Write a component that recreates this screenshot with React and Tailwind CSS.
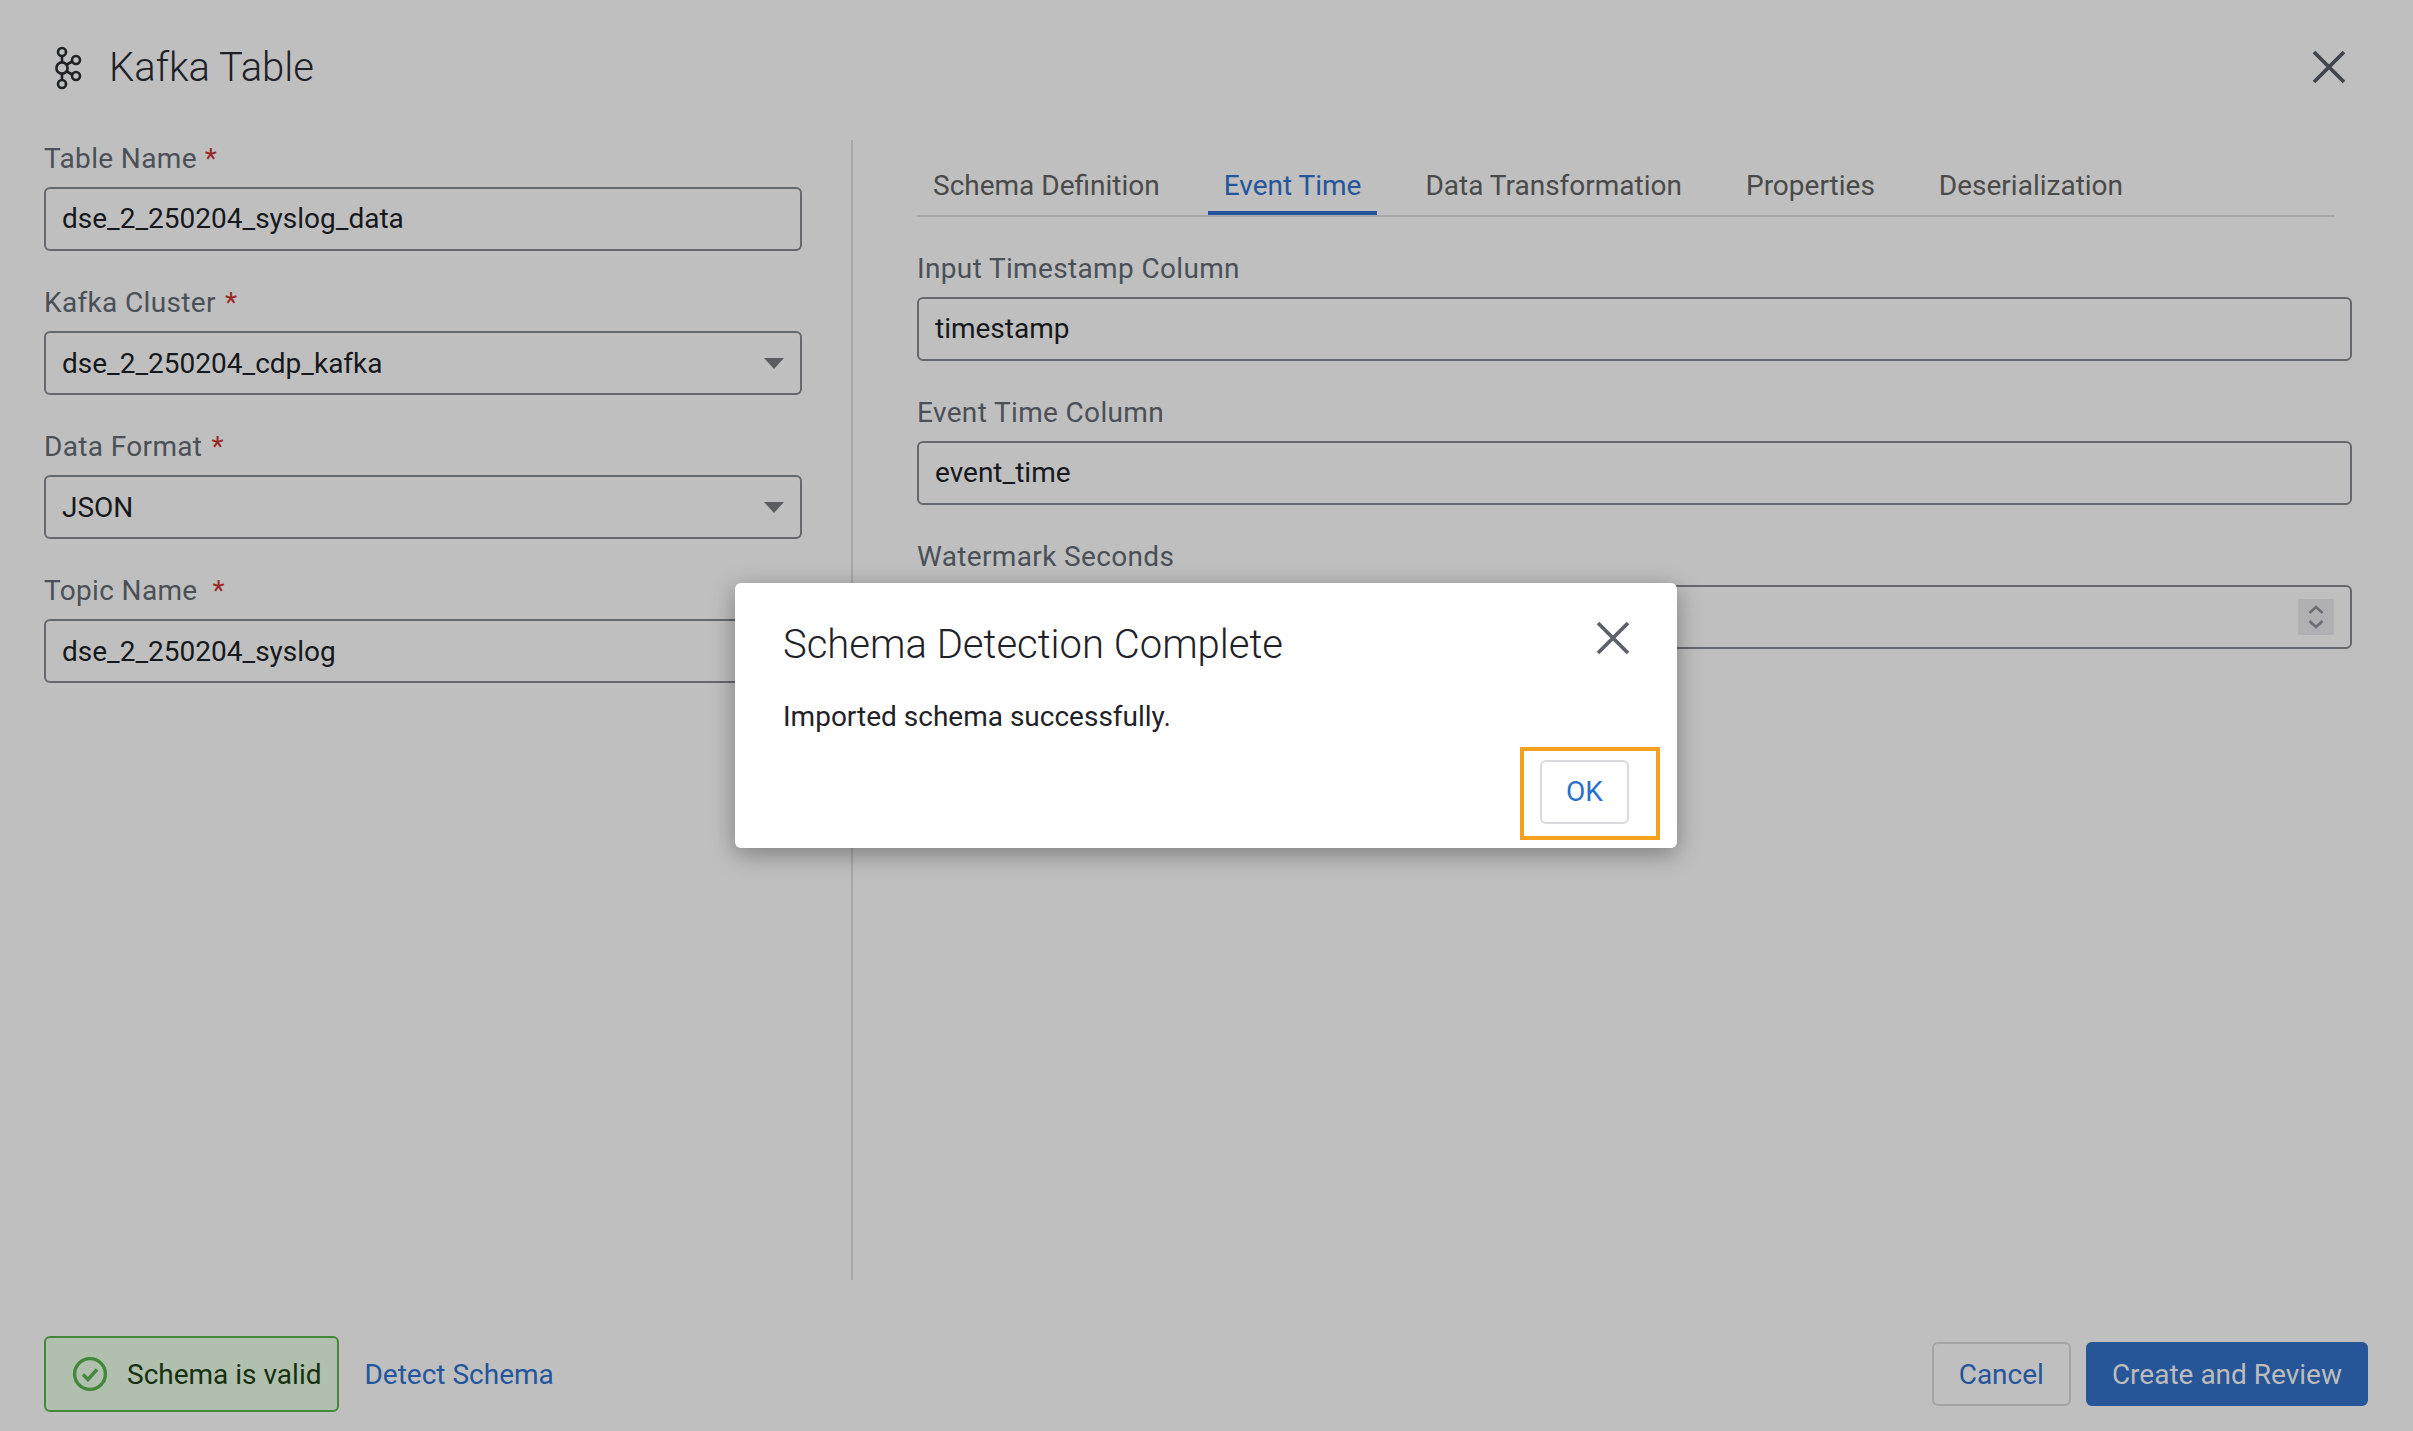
import React from "react";

const font = "font-['Roboto',sans-serif]";

const KafkaIcon = () => (
  <svg width="30" height="44" viewBox="0 0 30 44" fill="none" stroke="#1e2126" strokeWidth="2.6">
    <line x1="9" y1="10" x2="9" y2="16" />
    <line x1="9" y1="28" x2="9" y2="34" />
    <line x1="13" y1="19" x2="20" y2="15" />
    <line x1="13" y1="25" x2="20" y2="29" />
    <circle cx="9" cy="6" r="4" />
    <circle cx="9" cy="22" r="5.6" />
    <circle cx="9" cy="38" r="4" />
    <circle cx="23" cy="14" r="4" />
    <circle cx="23" cy="30" r="4" />
  </svg>
);

const CloseIcon = ({ color }) => (
  <svg width="34" height="34" viewBox="0 0 34 34" fill="none" stroke={color} strokeWidth="3.8">
    <path d="M2 2l30 30M32 2L2 32" />
  </svg>
);

const CheckIcon = () => (
  <svg width="36" height="36" viewBox="0 0 36 36" fill="none" stroke="#43883a">
    <circle cx="18" cy="18" r="15.4" strokeWidth="3.4" />
    <path d="M11 18.5l5 5 9-10" strokeWidth="3.4" />
  </svg>
);

const Caret = () => (
  <span className="w-0 h-0 border-x-[10px] border-x-transparent border-t-[11px] border-t-[#5a5c60]" />
);

const Spinner = () => (
  <span className="w-9 h-9 bg-[#b0b0b3] flex items-center justify-center">
    <svg width="20" height="28" viewBox="0 0 20 28" fill="none" stroke="#6d6d78" strokeWidth="2.6">
      <path d="M3.5 10l6.5-6 6.5 6" />
      <path d="M3.5 18l6.5 6 6.5-6" />
    </svg>
  </span>
);

const Field = ({ label, star, value, right, starClass = "ml-[9px]", valueClass = "" }) => (
  <div>
    <div className="h-9 mb-[11px] pt-[1px] text-[28px] leading-9 text-[#4b5057] tracking-[0.35px]">
      {label}
      {star && <span className={`text-[#9a2a2a] ${starClass}`}>*</span>}
    </div>
    <div className="h-16 border-2 border-[#65686c] rounded-[6px] pl-4 pr-4 flex items-center justify-between text-[28px] text-[#16181c]">
      <span className={valueClass}>{value}</span>
      {right}
    </div>
  </div>
);

const tabs = ["Schema Definition", "Event Time", "Data Transformation", "Properties", "Deserialization"];

export default function App() {
  return (
    <div className={`${font} relative w-full h-[1431px] bg-[#bfbfbf] flex flex-col overflow-hidden`}>
      <header className="h-[140px] shrink-0 flex items-start justify-between pl-[53px] pr-[67px] pt-[45px]">
        <div className="flex items-center gap-[26px]">
          <KafkaIcon />
          <h1 className="pt-[1px] text-[40px] leading-[44px] font-light text-[#1e2126]">Kafka Table</h1>
        </div>
        <div className="pt-[5px]">
          <CloseIcon color="#41464c" />
        </div>
      </header>

      <main className="h-[1140px] shrink-0 flex">
        <section className="w-[853px] shrink-0 border-r-2 border-[#a8a8a8] pl-[44px] pr-[49px] flex flex-col gap-[33px]">
          <Field label="Table Name" star value="dse_2_250204_syslog_data" starClass="ml-[8px]" />
          <Field label="Kafka Cluster" star value="dse_2_250204_cdp_kafka" right={<Caret />} valueClass="pt-[1px]" />
          <Field label="Data Format" star value="JSON" right={<Caret />} valueClass="pt-[1px]" />
          <Field label="Topic Name" star value="dse_2_250204_syslog" starClass="ml-[15px]" valueClass="pt-[1px]" />
        </section>

        <section className="flex-1 pl-[64px] pr-[61px] pt-[13px] flex flex-col gap-[33px]">
          <nav className="h-16 mr-[17px] border-b-2 border-[#a8a8a8] flex gap-8 text-[28px] text-[#4a4a4a]">
            {tabs.map((t) => (
              <span
                key={t}
                className={`h-[62px] px-4 pt-[8px] flex items-center border-b-4 ${t === "Event Time" ? "text-[#25559a] border-[#25559a]" : "border-transparent"}`}
              >
                {t}
              </span>
            ))}
          </nav>
          <Field label="Input Timestamp Column" value="timestamp" />
          <Field label="Event Time Column" value="event_time" />
          <Field label="Watermark Seconds" value="" right={<Spinner />} />
        </section>
      </main>

      <footer className="flex-1 pl-[44px] pr-[45px] pt-[37px] flex items-center justify-between">
        <div className="flex items-center gap-[25px]">
          <div className="h-[76px] border-2 border-[#43883a] rounded-[6px] bg-[#b0bfae] pl-[26px] pr-[16px] flex items-center gap-[19px] text-[28px] text-[#15310f]">
            <CheckIcon />
            <span className="pt-[2px]">Schema is valid</span>
          </div>
          <span className="pt-[2px] text-[28px] text-[#25559a]">Detect Schema</span>
        </div>
        <div className="flex items-center gap-[15px] text-[28px]">
          <button className="h-16 px-[25px] pt-[2px] border-2 border-[#a3a3a3] rounded-[6px] text-[#25559a]">Cancel</button>
          <button className="h-16 px-[26px] pt-[2px] rounded-[6px] bg-[#265598] text-[#bcbcbc]">Create and Review</button>
        </div>
      </footer>

      <div className="absolute left-[735px] top-[583px] w-[942px] h-[265px] bg-white rounded-[6px] shadow-[0_6px_24px_rgba(0,0,0,0.35)] pl-[48px] pr-[17px] flex flex-col">
        <div className="flex justify-between pt-[38px] pr-[30px]">
          <h2 className="text-[40px] leading-12 font-light text-[#1f2228]">Schema Detection Complete</h2>
          <div className="h-[34px]">
            <CloseIcon color="#5d6268" />
          </div>
        </div>
        <p className="mt-[30px] text-[28px] leading-9 text-[#1f2228]">Imported schema successfully.</p>
        <div className="mt-[12px] self-end w-[140px] h-[93px] border-[4px] border-[#f5a11e] pl-4 pt-[9px]">
          <button className="w-[89px] h-16 border-2 border-[#d9dadc] rounded-[6px] text-[28px] text-[#2a6fc9]">OK</button>
        </div>
      </div>
    </div>
  );
}
